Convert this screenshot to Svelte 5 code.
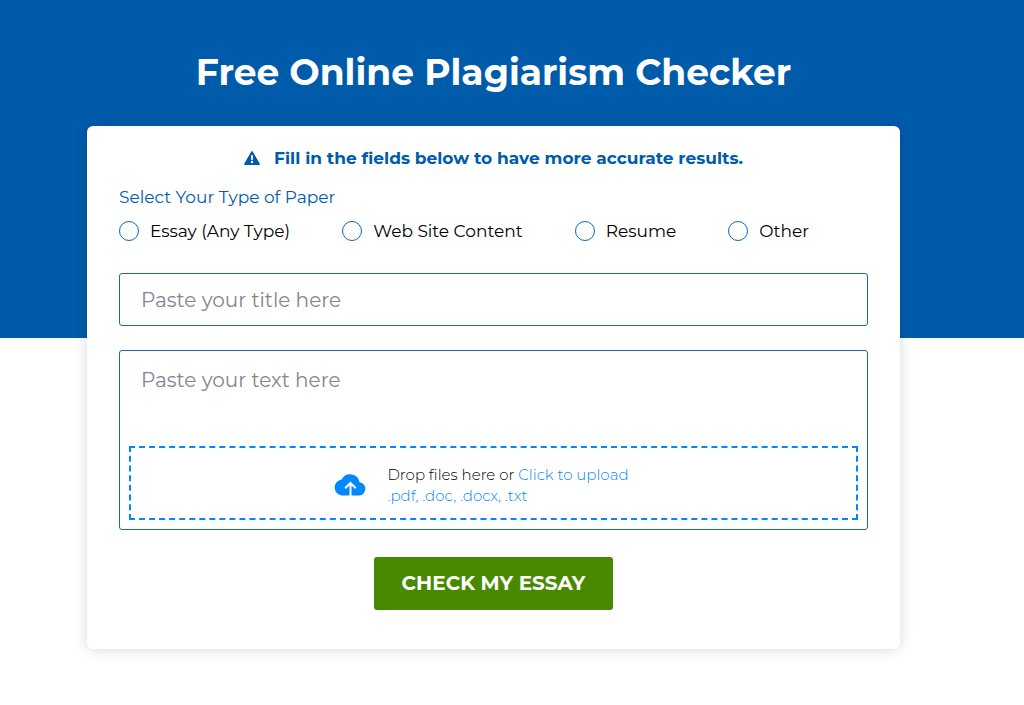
<script lang="ts">
  const paperTypes = ['Essay (Any Type)', 'Web Site Content', 'Resume', 'Other'];

  let paperType = $state('');
  let title = $state('');
  let text = $state('');
</script>

<main class="page">
  <h1>Free Online Plagiarism Checker</h1>

  <form class="card" onsubmit={(e) => e.preventDefault()}>
    <p class="notice">
      <svg class="warning" viewBox="0 0 16 14" aria-hidden="true">
        <path
          fill-rule="evenodd"
          d="M7.3.4Q8-.4 8.7.4L15.8 12.8Q16.2 14 15 14H1Q-.2 14 .2 12.8ZM6.9 4.3 7.2 9H8.8L9.1 4.3ZM8 9.8A1.2 1.2 0 1 0 8 12.2 1.2 1.2 0 1 0 8 9.8Z"
        />
      </svg>
      <span>Fill in the fields below to have more accurate results.</span>
    </p>

    <fieldset>
      <legend>Select Your Type of Paper</legend>
      <div class="options">
        {#each paperTypes as type}
          <label>
            <input type="radio" name="paper-type" value={type} bind:group={paperType} />
            <span>{type}</span>
          </label>
        {/each}
      </div>
    </fieldset>

    <input class="title" type="text" aria-label="Title" placeholder="Paste your title here" bind:value={title} />

    <div class="text-box">
      <textarea aria-label="Text" placeholder="Paste your text here" bind:value={text}></textarea>
      <div class="drop-zone">
        <svg class="cloud" viewBox="0 0 32 22" aria-hidden="true">
          <path
            d="M25.6 8.2A9.6 9.6 0 0 0 7.6 5.6 8 8 0 0 0 8 21.5H25.3A6.7 6.7 0 0 0 25.6 8.2Z"
          />
          <path class="arrow" d="M16.5 22V9.5M11.2 14.3 16.5 9 21.8 14.3" />
        </svg>
        <p>Drop files here or <a href="#upload">Click to upload</a><br /><span>.pdf, .doc, .docx, .txt</span></p>
      </div>
    </div>

    <button type="submit">CHECK MY ESSAY</button>
  </form>
</main>

<style>
  :global(body) {
    margin: 0;
    background: linear-gradient(#005bab 338px, #fff 338px) no-repeat;
  }

  .page {
    box-sizing: border-box;
    min-height: 100vh;
    padding: 48px 124px 56px 87px;
    font-family: Montserrat, Inter, sans-serif;
    color: #000;
  }

  h1 {
    margin: 0 0 30px;
    color: #fff;
    font-size: 36px;
    line-height: 48px;
    font-weight: 700;
    text-align: center;
  }

  .card {
    display: flex;
    flex-direction: column;
    padding: 20px 32px 39px;
    background: #fff;
    border-radius: 6px;
    box-shadow: 0 0 14px rgba(0, 20, 50, 0.16);
  }

  .notice {
    display: flex;
    align-items: center;
    justify-content: center;
    gap: 14px;
    margin: 0 0 15px;
    color: #005bab;
    font-size: 17px;
    line-height: 24px;
    font-weight: 700;
  }

  .warning {
    width: 16px;
    height: 14px;
    fill: currentColor;
  }

  fieldset {
    min-width: 0;
    margin: 0 0 30px;
    padding: 0;
    border: 0;
  }

  legend {
    padding: 0;
    color: #005bab;
    font-size: 17px;
    line-height: 24px;
  }

  .options {
    display: flex;
    flex-wrap: wrap;
    gap: 10px 52px;
    margin-top: 10px;
  }

  label {
    display: flex;
    align-items: center;
    gap: 11px;
    font-size: 17px;
    line-height: 24px;
  }

  input[type='radio'] {
    appearance: none;
    box-sizing: border-box;
    width: 20px;
    height: 20px;
    margin: 0;
    border: 1px solid #0f68b8;
    border-radius: 50%;
  }

  input[type='radio']:checked {
    background: radial-gradient(#005bab 5px, transparent 6px);
  }

  .title,
  .text-box {
    box-sizing: border-box;
    border: 1px solid #1c68b1;
    border-radius: 3px;
  }

  .title,
  textarea {
    color: #000;
    font-family: inherit;
    font-size: 20px;
    line-height: 24px;
    background: transparent;
  }

  .title {
    height: 53px;
    margin-bottom: 24px;
    padding: 0 21px;
  }

  .title::placeholder,
  textarea::placeholder {
    color: #858590;
    opacity: 1;
  }

  .text-box {
    padding: 9px;
    margin-bottom: 27px;
  }

  textarea {
    display: block;
    box-sizing: border-box;
    width: 100%;
    height: 86px;
    padding: 8px 12px;
    border: 0;
    resize: none;
  }

  .drop-zone {
    display: flex;
    align-items: center;
    justify-content: center;
    gap: 21px;
    padding: 16px 24px 12px 0;
    border: 2px dashed #0088ff;
  }

  .drop-zone p {
    margin: 0;
    font-size: 15px;
    line-height: 21px;
    font-weight: 300;
  }

  .drop-zone p span,
  a {
    color: #0088ff;
    text-decoration: none;
  }

  .cloud {
    width: 32px;
    height: 22px;
    fill: #0088ff;
  }

  .arrow {
    fill: none;
    stroke: #fff;
    stroke-width: 2;
  }

  button {
    align-self: center;
    padding: 14px 28px;
    color: #fff;
    font-family: inherit;
    font-size: 20px;
    line-height: 25px;
    font-weight: 700;
    background: #478a00;
    border: 0;
    border-radius: 3px;
    cursor: pointer;
  }
</style>
